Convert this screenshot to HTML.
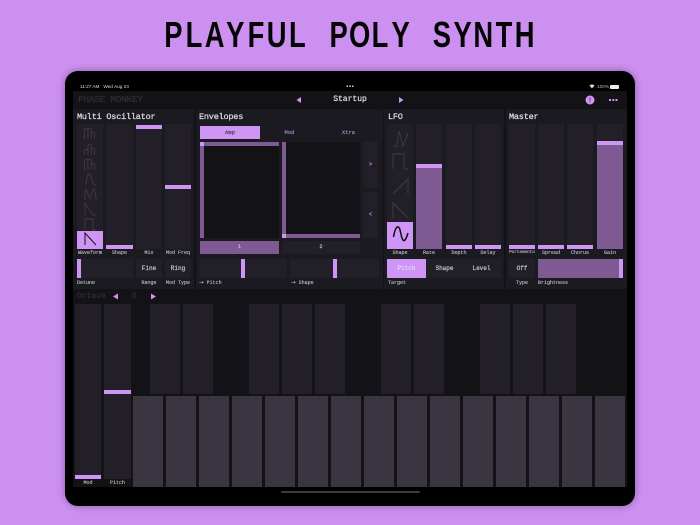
<!DOCTYPE html>
<html><head><meta charset="utf-8">
<style>
html,body{margin:0;padding:0;width:700px;height:525px;overflow:hidden;background:#cc90f1}
*{box-sizing:border-box}
div,span{position:absolute}
body{font-family:"Liberation Mono",monospace;color:#ddd}
.title{left:163px;top:14px;width:500px;height:42px;font-family:"Liberation Sans",sans-serif;font-size:36px;line-height:42px;font-weight:bold;color:#050505;white-space:nowrap;transform:scaleX(.76);transform-origin:0 0}
.title b{display:inline-block;width:27.200px;text-align:center}
.dev{left:65px;top:71px;width:570px;height:435px;background:#000;border-radius:13px;box-shadow:0 0 8px rgba(0,0,0,.35)}
.p{background:#1b1a20}
.d{background:#131217}
.s{background:#231f29}
.t{background:#cf95f5}
.f{background:#7f5a92}
.l{font-size:5px;line-height:6px;color:#c4c3c8;text-align:center;white-space:pre;-webkit-text-stroke:.1px #c4c3c8}
.h{font-size:8.500px;line-height:10px;color:#dcdbe0;letter-spacing:-.2px;white-space:pre;-webkit-text-stroke:.25px #dcdbe0}
.o{-webkit-text-stroke:.25px #2f2d35}
.m{font-size:6px;line-height:8px;text-align:center;color:#c8c7cc;white-space:pre;-webkit-text-stroke:.2px currentColor}
.k{background:#3a3541;top:396px;width:30px;height:91px}
.b{background:#221f28;top:304px;width:30px;height:90px}
svg{position:absolute;left:0;top:0}
</style></head><body>
<div class="title"><b>P</b><b>L</b><b>A</b><b>Y</b><b>F</b><b>U</b><b>L</b><b> </b><b>P</b><b>O</b><b>L</b><b>Y</b><b> </b><b>S</b><b>Y</b><b>N</b><b>T</b><b>H</b></div>
<div class="dev"></div>

<div style="left:80px;top:83.500px;font:4.700px/5px 'Liberation Sans',sans-serif;color:#ddd;white-space:pre">11:27 AM   Wed Aug 23</div>
<div style="left:588px;top:83.500px;width:21px;font:4.700px/5px 'Liberation Sans',sans-serif;color:#bbb;text-align:right;white-space:pre">100%</div>
<div style="left:610px;top:85px;width:9px;height:4px;background:#eee;border-radius:1px"></div>

<div class="d" style="left:73px;top:91px;width:554px;height:396px"></div>
<div class="h o" style="left:78px;top:95px;color:#2f2d35;font-size:9.500px;letter-spacing:-.3px">PHASE MONKEY</div>
<div class="h" style="left:330px;top:95px;width:40px;text-align:center;font-size:8px;letter-spacing:0">Startup</div>

<div class="p" style="left:73px;top:109px;width:121px;height:180px"></div>
<div class="p" style="left:196px;top:109px;width:187px;height:180px"></div>
<div class="p" style="left:384px;top:109px;width:120px;height:180px"></div>
<div class="p" style="left:506px;top:109px;width:121px;height:180px"></div>

<div class="h" style="left:77px;top:112px">Multi Oscillator</div>
<div class="h" style="left:199px;top:112px">Envelopes</div>
<div class="h" style="left:388px;top:112px">LFO</div>
<div class="h" style="left:509px;top:112px">Master</div>

<!-- osc sliders -->
<div class="s" style="left:77px;top:124px;width:26px;height:125px"></div>
<div class="t" style="left:77px;top:231px;width:26px;height:18px"></div>
<div class="s" style="left:106px;top:124px;width:27px;height:125px"></div>
<div class="t" style="left:106px;top:245px;width:27px;height:4px"></div>
<div class="s" style="left:136px;top:124px;width:26px;height:125px"></div>
<div class="t" style="left:136px;top:125px;width:26px;height:4px"></div>
<div class="s" style="left:165px;top:124px;width:26px;height:125px"></div>
<div class="t" style="left:165px;top:185px;width:26px;height:4px"></div>
<div class="l" style="left:77px;top:250px;width:26px">Waveform</div>
<div class="l" style="left:106px;top:250px;width:27px">Shape</div>
<div class="l" style="left:136px;top:250px;width:26px">Mix</div>
<div class="l" style="left:165px;top:250px;width:26px">Mod Freq</div>

<div class="s" style="left:77px;top:259px;width:56px;height:19px"></div>
<div class="t" style="left:77px;top:259px;width:4px;height:19px"></div>
<div class="s m" style="left:136px;top:259px;width:26px;height:19px;line-height:19px">Fine</div>
<div class="s m" style="left:165px;top:259px;width:26px;height:19px;line-height:19px">Ring</div>
<div class="l" style="left:77px;top:280px">Detune</div>
<div class="l" style="left:136px;top:280px;width:26px">Range</div>
<div class="l" style="left:165px;top:280px;width:26px">Mod Type</div>

<!-- envelopes -->
<div class="t m" style="left:200px;top:126px;width:60px;height:13px;line-height:13px;color:#4d3a5c;font-size:5.500px">Amp</div>
<div class="m" style="left:260px;top:126px;width:59px;height:13px;line-height:13px;color:#a67fc4;font-size:5.500px">Mod</div>
<div class="m" style="left:319px;top:126px;width:59px;height:13px;line-height:13px;color:#a67fc4;font-size:5.500px">Xtra</div>
<div style="left:200px;top:142px;width:79px;height:96px;background:#131217"></div>
<div class="f" style="left:200px;top:142px;width:79px;height:4px"></div>
<div class="f" style="left:200px;top:142px;width:4px;height:96px"></div>
<div class="t" style="left:200px;top:142px;width:4px;height:4px"></div>
<div style="left:282px;top:142px;width:78px;height:96px;background:#131217"></div>
<div class="f" style="left:282px;top:142px;width:4px;height:96px"></div>
<div class="f" style="left:282px;top:234px;width:78px;height:4px"></div>
<div class="t" style="left:282px;top:234px;width:4px;height:4px"></div>
<div class="s m" style="left:363px;top:142px;width:15px;height:46px;line-height:46px;color:#b583d6">&gt;</div>
<div class="s m" style="left:363px;top:192px;width:15px;height:46px;line-height:46px;color:#b583d6">&lt;</div>
<div class="f m" style="left:200px;top:241px;width:79px;height:13px;line-height:13px;font-size:5px">1</div>
<div class="s m" style="left:282px;top:241px;width:78px;height:13px;line-height:13px;font-size:5px">2</div>
<div class="s" style="left:199px;top:259px;width:88px;height:19px"></div>
<div class="t" style="left:241px;top:259px;width:4px;height:19px"></div>
<div class="s" style="left:290px;top:259px;width:89px;height:19px"></div>
<div class="t" style="left:333px;top:259px;width:4px;height:19px"></div>
<div class="l" style="left:199px;top:280px"><b style="font:5.500px/6px 'DejaVu Sans',sans-serif">→</b> Pitch</div>
<div class="l" style="left:291px;top:280px"><b style="font:5.500px/6px 'DejaVu Sans',sans-serif">→</b> Shape</div>

<!-- lfo -->
<div class="s" style="left:387px;top:124px;width:26px;height:125px"></div>
<div class="t" style="left:387px;top:222px;width:26px;height:27px"></div>
<div class="s" style="left:416px;top:124px;width:26px;height:125px"></div>
<div class="f" style="left:416px;top:164px;width:26px;height:85px"></div>
<div class="t" style="left:416px;top:164px;width:26px;height:4px"></div>
<div class="s" style="left:446px;top:124px;width:26px;height:125px"></div>
<div class="t" style="left:446px;top:245px;width:26px;height:4px"></div>
<div class="s" style="left:475px;top:124px;width:26px;height:125px"></div>
<div class="t" style="left:475px;top:245px;width:26px;height:4px"></div>
<div class="l" style="left:387px;top:250px;width:26px">Shape</div>
<div class="l" style="left:416px;top:250px;width:26px">Rate</div>
<div class="l" style="left:446px;top:250px;width:26px">Depth</div>
<div class="l" style="left:475px;top:250px;width:26px">Delay</div>
<div class="s" style="left:387px;top:259px;width:114px;height:19px"></div>
<div class="t m" style="left:387px;top:259px;width:39px;height:19px;line-height:19px;color:#e9d3f9">Pitch</div>
<div class="m" style="left:426px;top:259px;width:37px;height:19px;line-height:19px">Shape</div>
<div class="m" style="left:463px;top:259px;width:37px;height:19px;line-height:19px">Level</div>
<div class="l" style="left:388px;top:280px">Target</div>

<!-- master -->
<div class="s" style="left:509px;top:124px;width:26px;height:125px"></div>
<div class="t" style="left:509px;top:245px;width:26px;height:4px"></div>
<div class="s" style="left:538px;top:124px;width:26px;height:125px"></div>
<div class="t" style="left:538px;top:245px;width:26px;height:4px"></div>
<div class="s" style="left:567px;top:124px;width:26px;height:125px"></div>
<div class="t" style="left:567px;top:245px;width:26px;height:4px"></div>
<div class="s" style="left:597px;top:124px;width:26px;height:125px"></div>
<div class="f" style="left:597px;top:141px;width:26px;height:108px"></div>
<div class="t" style="left:597px;top:141px;width:26px;height:4px"></div>
<div class="l" style="left:509px;top:250px;width:26px;font-size:4.300px">Portamento</div>
<div class="l" style="left:538px;top:250px;width:26px">Spread</div>
<div class="l" style="left:567px;top:250px;width:26px">Chorus</div>
<div class="l" style="left:597px;top:250px;width:26px">Gain</div>
<div class="s m" style="left:509px;top:259px;width:26px;height:19px;line-height:19px">Off</div>
<div class="f" style="left:538px;top:259px;width:85px;height:19px"></div>
<div class="t" style="left:619px;top:259px;width:4px;height:19px"></div>
<div class="l" style="left:509px;top:280px;width:26px">Type</div>
<div class="l" style="left:538px;top:280px">Brightness</div>

<!-- keyboard -->
<div class="h o" style="left:77px;top:292px;color:#2f2d35;font-size:8px;letter-spacing:0">Octave</div>
<div class="h o" style="left:132px;top:292px;color:#2f2d35;font-size:8px;letter-spacing:0">0</div>
<div class="s" style="left:75px;top:304px;width:26px;height:175px"></div>
<div class="t" style="left:75px;top:475px;width:26px;height:4px"></div>
<div class="s" style="left:104px;top:304px;width:27px;height:175px"></div>
<div class="t" style="left:104px;top:390px;width:27px;height:4px"></div>
<div class="l" style="left:75px;top:480px;width:26px">Mod</div>
<div class="l" style="left:104px;top:480px;width:27px">Pitch</div>

<div class="b" style="left:150px"></div><div class="b" style="left:183px"></div>
<div class="b" style="left:249px"></div><div class="b" style="left:282px"></div><div class="b" style="left:315px"></div>
<div class="b" style="left:381px"></div><div class="b" style="left:414px"></div>
<div class="b" style="left:480px"></div><div class="b" style="left:513px"></div><div class="b" style="left:546px"></div>

<div class="k" style="left:133px"></div><div class="k" style="left:166px"></div><div class="k" style="left:199px"></div>
<div class="k" style="left:232px"></div><div class="k" style="left:265px"></div><div class="k" style="left:298px"></div>
<div class="k" style="left:331px"></div><div class="k" style="left:364px"></div><div class="k" style="left:397px"></div>
<div class="k" style="left:430px"></div><div class="k" style="left:463px"></div><div class="k" style="left:496px"></div>
<div class="k" style="left:529px"></div><div class="k" style="left:562px"></div><div class="k" style="left:595px"></div>

<div style="left:281px;top:491px;width:139px;height:2px;background:#3a3a3a;border-radius:1px"></div>

<svg width="700" height="525" viewBox="0 0 700 525" fill="none">
<g fill="#cfcfcf"><rect x="346.500" y="85.500" width="1.500" height="1.500"/><rect x="349.300" y="85.500" width="1.500" height="1.500"/><rect x="352" y="85.500" width="1.500" height="1.500"/></g>
<path d="M589.500 85.500Q592 83.500 594.500 85.500L592 88.500Z" fill="#ddd"/>
<g fill="#cf95f5">
<path d="M301 97V103L296.500 100Z"/>
<path d="M399 97V103L403.500 100Z"/>
<path d="M118 293.500V299.500L113 296.500Z"/>
<path d="M151 293.500V299.500L156 296.500Z"/>
<circle cx="590" cy="100" r="4.500"/>
<rect x="609" y="99" width="2" height="2"/><rect x="612.300" y="99" width="2" height="2"/><rect x="615.500" y="99" width="2" height="2"/>
</g>
<rect x="589.500" y="97.500" width="1" height="3.200" fill="#4d3a5c"/><rect x="589.500" y="101.500" width="1" height="1" fill="#4d3a5c"/>
<!-- waveform icons -->
<g stroke="#3f3c47" stroke-width=".9">
<path d="M84.500 139V130a1.700 1.700 0 0 1 3.400 0V139V130a1.700 1.700 0 0 1 3.400 0V139V134a1.700 1.700 0 0 1 3.400 0V139"/>
<path d="M84.500 155V151a1.700 1.700 0 0 1 3.400 0V155V146a1.700 1.700 0 0 1 3.400 0V155V150a1.700 1.700 0 0 1 3.400 0V155"/>
<path d="M84.500 170V161a1.700 1.700 0 0 1 3.400 0V170V161a1.700 1.700 0 0 1 3.400 0V170V165a1.700 1.700 0 0 1 3.400 0V170"/>
<path d="M85 185C87 185 86 174 89 174C92 174 91 185 96 185"/>
<path d="M85 200C85 193 85 189 86 189S89 199 90 199S92 189 93 189S96 193 96 200"/>
<path d="M85 215V203L93 215H96"/>
<path d="M85 230V219H93V230H96"/>
<path d="M85 245V233L96 245" stroke="#111" stroke-width="1"/>
<!-- lfo icons -->
<path d="M393 146H397L399 131L403 146L408 133"/>
<path d="M393 169V154H404V169H408"/>
<path d="M393 194L408 179V194"/>
<path d="M393 218V203L408 218"/>
<path d="M393.500 237C395.500 225 399 224 400.500 232S404 246 408 233" stroke="#0d0d0d" stroke-width="1.500"/>
</g>
</svg>
</body></html>
